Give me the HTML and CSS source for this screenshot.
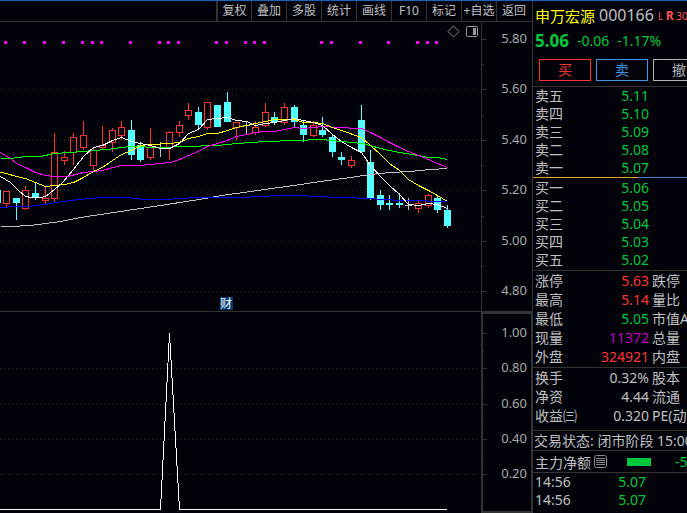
FILE: index.html
```
<!DOCTYPE html>
<html lang="zh-CN">
<head>
    <meta charset="UTF-8">
    <meta name="viewport" content="width=device-width, initial-scale=1.0">
    <title>申万宏源 000166</title>
    <link rel="stylesheet" href="styles.css">
</head>
<body>

    <div class="app">
        <main class="charts">
            <div class="toolbar">
                <button>复权</button>
                <button>叠加</button>
                <button>多股</button>
                <button>统计</button>
                <button>画线</button>
                <button>F10</button>
                <button>标记</button>
                <button>+自选</button>
                <button>返回</button>
            </div>

            <!-- K line pane -->
            <svg class="pane" viewBox="0 22 532 290">
                <g class="grid">
                    <path d="M0 89.5H480M0 140.5H480M0 190.5H480M0 241.5H480M0 291.5H480"/>
                </g>
                <g class="axis">
                    <path d="M481.5 22V311M0 311.5H532"/>
                    <path d="M482 39.5h5M482 89.5h5M482 140.5h5M482 190.5h5M482 241.5h5M482 291.5h5"/>
                    <path d="M482 64.5h2M482 115.5h2M482 165.5h2M482 216.5h2M482 266.5h2"/>
                </g>
                <g class="scale">
                    <text x="527" y="43">5.80</text>
                    <text x="527" y="93">5.60</text>
                    <text x="527" y="144">5.40</text>
                    <text x="527" y="194">5.20</text>
                    <text x="527" y="245">5.00</text>
                    <text x="527" y="295">4.80</text>
                </g>
                <g id="signals" class="signals"></g>
                <g id="candles"></g>
                <g id="averages" class="averages"></g>
                <path class="diamond" d="M453.500 26L459 31.500L453.500 37L448 31.500Z"/>
                <rect class="split" x="466.500" y="26.500" width="11" height="10" rx="1"/>
                <rect class="split-fill" x="473" y="28" width="3" height="7"/>
                <rect class="tag" x="220" y="297" width="13" height="13"/>
                <text class="tag-text" x="226" y="308">财</text>
            </svg>

            <!-- indicator pane -->
            <svg class="pane" viewBox="0 312 532 201">
                <g class="grid">
                    <path d="M0 368.500H480M0 404.500H480M0 439.500H480M0 474.500H480"/>
                </g>
                <g class="axis">
                    <path class="frame" d="M482 312V512H532V313H482"/>
                    <path d="M483 333.500h4M483 368.500h4M483 404.500h4M483 439.500h4M483 474.500h4"/>
                    <path d="M482 351.500h2M482 386.500h2M482 422.500h2M482 457.500h2"/>
                </g>
                <g class="scale">
                    <text x="527" y="337">1.00</text>
                    <text x="527" y="372">0.80</text>
                    <text x="527" y="408">0.60</text>
                    <text x="527" y="443">0.40</text>
                    <text x="527" y="478">0.20</text>
                </g>
                <path class="spike" d="M0 509.500H160.500L169.500 333.500L179.500 509.500H447"/>
            </svg>
        </main>

        <aside class="quote">
            <header class="stock">
                <h1><span class="name">申万宏源</span> <span class="code">000166</span> <span class="flags">L <b>R</b> <i>300</i></span></h1>
                <p class="price green"><b>5.06</b><span>-0.06</span><span>-1.17%</span></p>
                <div class="orders">
                    <button class="buy">买</button>
                    <button class="sell">卖</button>
                    <button class="cancel">撤</button>
                </div>
            </header>

            <table class="levels asks">
                <tr><th>卖五</th><td class="green">5.11</td></tr>
                <tr><th>卖四</th><td class="green">5.10</td></tr>
                <tr><th>卖三</th><td class="green">5.09</td></tr>
                <tr><th>卖二</th><td class="green">5.08</td></tr>
                <tr><th>卖一</th><td class="green">5.07</td></tr>
            </table>
            <div class="ratio"></div>
            <table class="levels bids">
                <tr><th>买一</th><td class="green">5.06</td></tr>
                <tr><th>买二</th><td class="green">5.05</td></tr>
                <tr><th>买三</th><td class="green">5.04</td></tr>
                <tr><th>买四</th><td class="green">5.03</td></tr>
                <tr><th>买五</th><td class="green">5.02</td></tr>
            </table>

            <table class="stats">
                <tr><th>涨停</th><td class="red">5.63</td><th>跌停</th></tr>
                <tr><th>最高</th><td class="red">5.14</td><th>量比</th></tr>
                <tr><th>最低</th><td class="green">5.05</td><th>市值A</th></tr>
                <tr><th>现量</th><td class="purple">11372</td><th>总量</th></tr>
                <tr><th>外盘</th><td class="red">324921</td><th>内盘</th></tr>
            </table>
            <table class="stats basics">
                <tr><th>换手</th><td>0.32%</td><th>股本</th></tr>
                <tr><th>净资</th><td>4.44</td><th>流通</th></tr>
                <tr><th>收益㈢</th><td>0.320</td><th>PE(动</th></tr>
            </table>

            <p class="status">交易状态: 闭市阶段 15:00</p>
            <div class="flow">
                <span>主力净额</span>
                <svg class="list-icon" width="13" height="13" viewBox="0 0 13 13">
                    <rect x="0.500" y="0.500" width="12" height="12" rx="2"/>
                    <path d="M2 3.500H11M2 5.500H11M2 7.500H11M2 9.500H11"/>
                </svg>
                <span class="flow-bar"></span>
                <span class="green">-5</span>
            </div>
            <table class="levels ticks">
                <tr><th>14:56</th><td class="green">5.07</td></tr>
                <tr><th>14:56</th><td class="green">5.07</td></tr>
            </table>
        </aside>
    </div>

    <script src="chart.js"></script>
</body>
</html>
```
FILE: styles.css
```
* {
    box-sizing: border-box;
}
body {
    margin: 0;
    background-color: #01020a;
    color: #c0c0c0;
    font-family: "Noto Sans", "Noto Sans CJK SC", sans-serif;
    font-size: 14px;
    overflow: hidden;
}
h1, p {
    margin: 0;
    font-weight: normal;
}
button {
    padding: 0;
    background: none;
    font-family: inherit;
    cursor: pointer;
}
.app {
    display: flex;
    min-height: 100vh;
    border-top: 1px solid #1464c0;
}
.charts {
    flex: 1;
    min-width: 0;
}

/* toolbar */
.toolbar {
    display: flex;
    justify-content: flex-end;
    height: 21px;
    padding-right: 1px;
    border-bottom: 1px solid #333;
}
.toolbar button {
    width: 35px;
    border: none;
    border-left: 1px solid #333;
    color: #c0c0c0;
    font-size: 12px;
    line-height: 20px;
    white-space: nowrap;
    overflow: hidden;
}
.toolbar button:first-child {
    border-left-width: 2px;
}

/* charts */
.pane {
    display: block;
    width: 100%;
    height: auto;
}
.pane path, .pane rect, .pane polyline {
    fill: none;
    shape-rendering: crispEdges;
}
.grid path {
    stroke: #333;
    stroke-dasharray: 1 3;
}
.axis path {
    stroke: #333;
}
.axis .frame {
    stroke-width: 2;
}
.scale text {
    fill: #a8a8a8;
    font-size: 13px;
    text-anchor: end;
}
.pane .signals rect {
    fill: #f0f;
}
.pane .up {
    stroke: #ff3232;
}
.pane .down {
    fill: #54ffff;
}
.pane .flat {
    fill: #c0c0c0;
}
.pane .up-wick {
    fill: #ff3232;
}
.averages .white { stroke: #fff; }
.averages .yellow { stroke: #ff0; }
.averages .magenta { stroke: #f0f; }
.averages .green-line { stroke: #0f0; }
.averages .gray { stroke: #c0c0c0; }
.averages .blue { stroke: #00f; }
.pane .diamond {
    stroke: #888;
    shape-rendering: auto;
}
.pane .split {
    stroke: #999;
    shape-rendering: auto;
}
.pane .split-fill {
    fill: #999;
}
.pane .tag {
    fill: #003a70;
}
.tag-text {
    fill: #fff;
    font-size: 12px;
    text-anchor: middle;
}
.pane .spike {
    stroke: #fff;
}

/* quote panel */
.quote {
    flex: 0 0 155px;
    border-left: 1px solid #333;
    overflow: hidden;
    white-space: nowrap;
}
.green { color: #00c83c; }
.red { color: #ff3232; }
.purple { color: #c000c0; }
.stock {
    height: 86px;
    border-bottom: 1px solid #333;
}
.stock h1 {
    display: flex;
    align-items: center;
    gap: 4px;
    height: 28px;
    padding-left: 2px;
}
.name {
    color: #ff0;
    font-size: 15px;
}
.code {
    font-size: 16px;
}
.flags {
    color: #ff5050;
    font-size: 10px;
}
.flags b {
    font-size: 12px;
}
.flags i {
    font-style: normal;
}
.price {
    display: flex;
    align-items: center;
    gap: 8px;
    height: 22px;
    padding-left: 2px;
}
.price b {
    font-size: 17px;
}
.orders {
    display: flex;
    gap: 5px;
    padding: 8px 6px 0;
}
.orders button {
    flex: 0 0 52px;
    height: 22px;
    border: 1px solid;
    font-size: 14px;
    line-height: 20px;
}
.orders .buy { color: #ff3232; }
.orders .sell { color: #3c96e6; }
.orders .cancel { color: #b0b0b0; }

table {
    border-collapse: collapse;
    table-layout: fixed;
}
th, td {
    padding: 0;
    font-weight: normal;
}
th {
    text-align: left;
}
td {
    text-align: right;
}
.levels {
    width: 114px;
    margin-left: 2px;
}
.levels th, .levels td {
    height: 18px;
    line-height: 18px;
}
.ratio {
    height: 1px;
    background: linear-gradient(to right, #e0a030 105px, #3c82d2 105px);
}
.bids {
    margin-top: 1px;
    margin-bottom: 1px;
}
.stats {
    width: 174px;
    border-top: 1px solid #333;
}
.stats th, .stats td {
    width: 58px;
    height: 19px;
    line-height: 19px;
}
.stats th:first-child {
    padding-left: 2px;
}
.stats th:last-child {
    padding-left: 3px;
}
.basics {
    margin-top: 1px;
    margin-bottom: 5px;
}
.status {
    height: 20px;
    padding-left: 1px;
    border-top: 1px solid #333;
    line-height: 19px;
}
.flow {
    display: flex;
    align-items: center;
    height: 23px;
    padding-left: 2px;
    border-top: 1px solid #333;
    border-bottom: 1px solid #333;
}
.list-icon {
    flex: none;
    margin-left: 3px;
    margin-right: 20px;
    fill: none;
    stroke: #888;
}
.flow-bar {
    flex: 0 0 24px;
    height: 8px;
    margin-right: 24px;
    background-color: #00c83c;
}
.ticks {
    width: 111px;
}
```
FILE: chart.js
```
const SVG_NS = 'http://www.w3.org/2000/svg';

// [center x, body top, body bottom, wick top, wick bottom, type]
const CANDLES = [
    [-3, 190, 203, 190, 203, 'down'],
    [6, 191, 204, 191, 208, 'up'],
    [16, 198, 203, 198, 220, 'down'],
    [25, 190, 209, 186, 210, 'up'],
    [35, 193, 197, 182, 200, 'down'],
    [45, 198, 201, 186, 205, 'up'],
    [54, 152, 199, 133, 202, 'up'],
    [64, 157, 161, 151, 165, 'up'],
    [73, 137, 153, 133, 165, 'up'],
    [83, 135, 148, 121, 150, 'up'],
    [93, 150, 166, 147, 170, 'up'],
    [102, 145, 148, 126, 150, 'up'],
    [112, 130, 143, 128, 152, 'up'],
    [121, 127, 136, 121, 140, 'up'],
    [131, 130, 155, 120, 160, 'down'],
    [140, 145, 160, 142, 162, 'down'],
    [150, 147, 158, 128, 160, 'up'],
    [160, 147, 148, 142, 157, 'flat'],
    [169, 132, 148, 131, 160, 'up'],
    [179, 125, 133, 121, 137, 'up'],
    [188, 110, 116, 103, 120, 'up'],
    [198, 112, 125, 107, 130, 'down'],
    [207, 102, 128, 102, 130, 'up'],
    [217, 105, 127, 105, 127, 'down'],
    [227, 102, 122, 92, 122, 'down'],
    [236, 122, 128, 122, 140, 'up'],
    [246, 125, 126, 121, 135, 'flat'],
    [255, 127, 133, 121, 135, 'up'],
    [265, 112, 126, 103, 127, 'up'],
    [274, 117, 122, 112, 125, 'down'],
    [284, 107, 123, 103, 125, 'up'],
    [294, 107, 122, 105, 128, 'down'],
    [303, 125, 135, 121, 142, 'down'],
    [313, 125, 136, 121, 137, 'up'],
    [322, 130, 135, 117, 137, 'down'],
    [332, 137, 152, 135, 157, 'down'],
    [341, 157, 160, 152, 165, 'down'],
    [351, 160, 166, 156, 168, 'up'],
    [361, 120, 152, 105, 152, 'down'],
    [370, 162, 198, 150, 200, 'down'],
    [380, 195, 205, 190, 210, 'down'],
    [389, 203, 205, 195, 210, 'down'],
    [399, 203, 205, 193, 208, 'down'],
    [408, 205, 206, 198, 210, 'flat'],
    [418, 203, 209, 201, 213, 'up'],
    [428, 195, 206, 194, 208, 'up'],
    [437, 198, 210, 195, 213, 'down'],
    [447, 210, 226, 205, 228, 'down']
];

const AVERAGES = {
    gray: '0,226 10,226 30,225 45,223 60,221 80,217 100,214 120,211 140,208 160,205 205,198 221,195 250,191 300,184 320,181 350,177 370,174 390,172 410,171 430,169 447,168',
    blue: '0,207 16,206 27,206 50,203 70,200 80,199 100,197 125,197 145,199 165,199 195,197 240,197 280,195 300,195 317,196 340,197 372,198 380,199 405,200 447,201',
    'green-line': '0,158 10,158 25,156 40,156 54,153 70,152 93,150 107,149 121,147 131,146 160,147 184,146 217,145 236,143 265,141 294,140 322,139 341,141 361,143 370,145 380,148 389,150 399,152 418,155 428,157 437,157 447,159',
    magenta: '0,152 10,158 16,163 25,167 35,172 45,175 54,176 67,176 83,172 93,171 102,170 112,167 121,165 140,165 150,164 170,162 179,159 188,155 198,151 207,146 217,143 227,140 236,136 246,134 255,132 265,131 274,131 284,129 294,127 303,128 313,127 322,126 336,127 361,128 370,132 380,137 389,142 399,147 408,151 418,155 428,159 437,163 447,167',
    yellow: '0,172 6,173 16,176 25,178 35,182 45,186 54,185 64,184 73,182 83,177 93,171 102,167 112,160 121,154 131,150 140,145 150,144 169,143 179,142 188,138 198,136 207,133 217,133 227,130 236,127 246,125 255,123 265,121 274,119 294,119 303,122 313,122 322,123 332,127 341,130 361,137 370,145 380,154 389,163 399,170 408,179 418,185 428,190 437,195 447,201',
    white: '0,176 10,182 18,190 25,196 31,197 40,197 45,196 54,189 62,182 73,169 83,156 93,147 102,145 112,140 121,137 131,141 140,143 150,145 160,148 169,148 179,143 188,133 198,129 207,119 217,118 227,117 236,120 246,121 255,125 265,123 274,122 284,120 294,118 303,120 313,122 322,125 332,134 341,141 351,147 361,152 370,165 380,176 389,185 399,194 408,204 418,205 428,203 437,204 447,208'
};

const SIGNALS = [4, 23, 43, 62, 81, 91, 100, 129, 158, 167, 177, 215, 225, 244, 253, 263, 320, 330, 359, 387, 416, 426, 435];

function add(parent, tag, attrs) {
    const el = document.createElementNS(SVG_NS, tag);
    for (const key in attrs) {
        el.setAttribute(key, attrs[key]);
    }
    parent.appendChild(el);
}

const candles = document.getElementById('candles');
CANDLES.forEach(([x, top, bottom, high, low, type]) => {
    if (type === 'up') {
        // hollow body, wick only above and below it
        add(candles, 'rect', { class: 'up-wick', x: x, y: high, width: 1, height: top - high });
        add(candles, 'rect', { class: 'up-wick', x: x, y: bottom, width: 1, height: low - bottom });
        add(candles, 'rect', { class: 'up', x: x - 2.5, y: top + 0.5, width: 6, height: bottom - top - 1 });
    } else {
        add(candles, 'rect', { class: type, x: x, y: high, width: 1, height: low - high });
        add(candles, 'rect', { class: type, x: x - 3, y: top, width: 7, height: bottom - top });
    }
});

const averages = document.getElementById('averages');
for (const name in AVERAGES) {
    add(averages, 'polyline', { class: name, points: AVERAGES[name], transform: 'translate(0.5 0.5)' });
}

const signals = document.getElementById('signals');
SIGNALS.forEach(x => add(signals, 'rect', { x: x, y: 41, width: 3, height: 3 }));
```
